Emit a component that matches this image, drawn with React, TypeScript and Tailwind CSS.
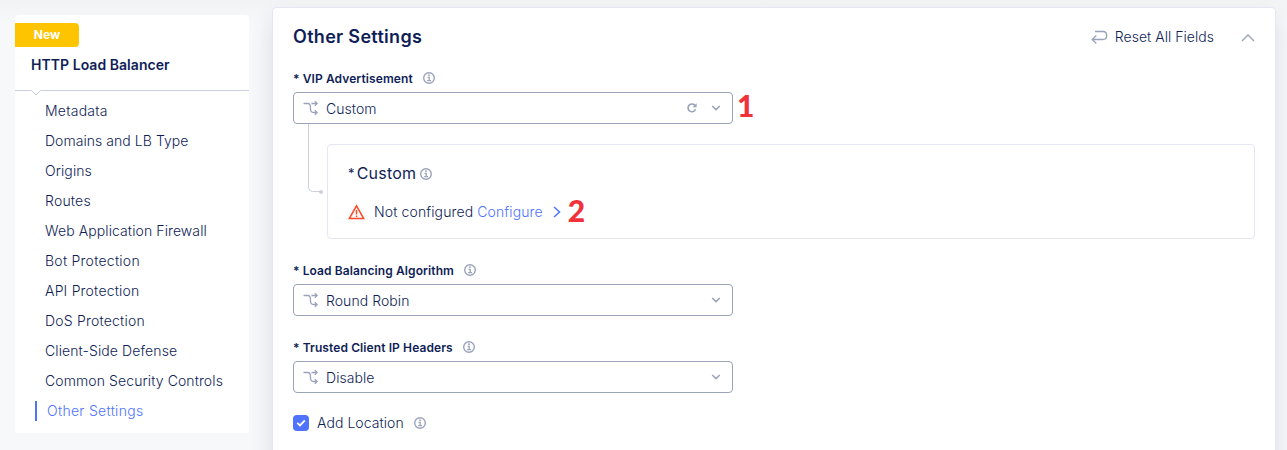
import React from "react";

const sections: { name: string; tracking: string }[] = [
  { name: "Metadata", tracking: "tracking-[0.25px]" },
  { name: "Domains and LB Type", tracking: "tracking-[0.05px]" },
  { name: "Origins", tracking: "tracking-[0.1px]" },
  { name: "Routes", tracking: "tracking-[0.2px]" },
  { name: "Web Application Firewall", tracking: "tracking-[0.1px]" },
  { name: "Bot Protection", tracking: "tracking-[0.25px]" },
  { name: "API Protection", tracking: "tracking-[0.2px]" },
  { name: "DoS Protection", tracking: "tracking-[0.2px]" },
  { name: "Client-Side Defense", tracking: "tracking-[0.1px]" },
  { name: "Common Security Controls", tracking: "tracking-[0.1px]" },
];

function InfoIcon() {
  return (
    <svg width="12" height="12" viewBox="0 0 12 12" fill="none" stroke="#9ba3bb" className="shrink-0">
      <circle cx="6" cy="6" r="5.3" strokeWidth="1.4" />
      <path d="M4.5 5.3H6.2V8.6M4.2 8.6H8" strokeWidth="1.3" />
      <circle cx="6" cy="3.2" r="0.9" fill="#9ba3bb" stroke="none" />
    </svg>
  );
}

function BranchIcon() {
  return (
    <svg width="16" height="16" viewBox="0 0 16 16" fill="none" stroke="#9ba3bb" strokeWidth="1.3" className="shrink-0">
      <path d="M0.5 3.5H5C8 3.5 7.3 6.5 7.5 9C7.6 11.8 8.5 12.5 10.5 12.5H14M8.5 3.5H14" />
      <path d="M11.8 1.2L14.1 3.5L11.8 5.8M11.8 10.2L14.1 12.5L11.8 14.8" />
    </svg>
  );
}

function ChevronDown() {
  return (
    <svg width="10" height="6" viewBox="0 0 10 6" fill="none" stroke="#9ba3bb" strokeWidth="1.5" className="shrink-0">
      <path d="M1.2 1L5 4.6L8.8 1" />
    </svg>
  );
}

function RefreshIcon() {
  return (
    <svg width="10" height="10" viewBox="0 0 10 10" fill="none" stroke="#9ba3bb" strokeWidth="1.6" className="shrink-0">
      <path d="M8.6 6.3A3.9 3.9 0 1 1 8.2 2.7" />
      <path d="M9.6 0.3V4.3H5.6Z" fill="#9ba3bb" stroke="none" />
    </svg>
  );
}

function FieldLabel({ text }: { text: string }) {
  return (
    <div className="flex h-4 items-center text-[12px] font-semibold tracking-[0.1px]">
      <span className="pt-px leading-4">* {text}</span>
      <span className="ml-[10px]">
        <InfoIcon />
      </span>
    </div>
  );
}

function SelectBox({ value, refresh = false }: { value: string; refresh?: boolean }) {
  return (
    <div className="flex h-8 w-[440px] items-center rounded-[4px] border border-[#9aa3b8] pr-[11px] pl-[9px]">
      <BranchIcon />
      <span className="ml-[7px] flex-1 pt-[2px] text-[14px] leading-5 font-[350] tracking-[0.06px]">{value}</span>
      {refresh && <RefreshIcon />}
      <span className="ml-[14px]">
        <ChevronDown />
      </span>
    </div>
  );
}

function Sidebar() {
  return (
    <aside className="mt-[15px] ml-[15px] h-[418px] w-[234px] shrink-0 rounded-[4px] bg-white pt-2">
      <div className="flex h-6 w-16 items-center justify-center rounded-r-[4px] bg-[#ffc400] text-[12px] font-bold text-white">
        New
      </div>
      <h2 className="mt-2 ml-4 text-[14px] leading-5 font-semibold tracking-[0.04px]">HTTP Load Balancer</h2>
      <svg width="234" height="8" viewBox="0 0 234 8" fill="none" stroke="#cad0e0" className="mt-[14px] block">
        <path d="M0 1.5H16.5L21 6L25.5 1.5H234" />
      </svg>
      <nav className="mt-[-1px] flex flex-col pl-[30px] text-[14px] leading-[30px] font-light">
        {sections.map((s) => (
          <a key={s.name} className={`h-[30px] whitespace-nowrap ${s.tracking}`}>
            {s.name}
          </a>
        ))}
        <a className="ml-[-10px] flex h-[30px] items-center tracking-[0.3px] text-[#4f73ff]">
          <span className="mr-[10px] h-5 w-[2px] bg-[#4f73ff]" />
          Other Settings
        </a>
      </nav>
    </aside>
  );
}

function CustomPanel() {
  return (
    <div className="flex">
      <svg width="34" height="115" viewBox="0 0 34 115" fill="none" className="shrink-0">
        <path d="M15.5 0V63.5Q15.5 67.5 19.5 67.5H27" stroke="#cad0e0" />
        <circle cx="28" cy="68" r="2" fill="#cad0e0" />
      </svg>
      <div className="mt-5 h-[95px] w-[928px] rounded-[4px] border border-[#e4e6f1] pl-5">
        <div className="mt-[18px] flex h-5 items-center text-[16px] leading-5 tracking-[0.2px]">
          <span className="mr-[2px] text-[13px]">*</span>
          <span>Custom</span>
          <span className="ml-1 pt-px">
            <InfoIcon />
          </span>
        </div>
        <div className="mt-[19px] flex h-5 items-center text-[14px] leading-5 font-light tracking-[0.12px]">
          <svg width="17" height="16" viewBox="0 0 17 16" fill="none" stroke="#fb4a26" strokeWidth="1.5">
            <path d="M8.5 1.8L15.7 14.6H1.3Z" />
            <path d="M8.5 6V10.4M8.5 11.6V13" />
          </svg>
          <span className="ml-[9px]">Not configured</span>
          <a className="ml-1 text-[#4f73ff]">Configure</a>
          <svg width="8" height="12" viewBox="0 0 8 12" fill="none" stroke="#4f73ff" strokeWidth="1.5" className="ml-[10px]">
            <path d="M1 1L6.5 6L1 11" />
          </svg>
          <span className="mt-[-4px] ml-[7px] font-['Lato'] text-[30px] leading-5 font-black tracking-normal text-[#f1323b]">2</span>
        </div>
      </div>
    </div>
  );
}

export default function App() {
  return (
    <div className="flex h-[450px] w-[1287px] overflow-hidden bg-linear-to-b from-[#f2f3f5] to-[#f7f8fa] to-[24px] font-['Inter','Liberation_Sans',sans-serif] text-[#0f1e57]">
      <Sidebar />
      <main className="mt-[7px] ml-[23px] h-[480px] w-[1004px] shrink-0 rounded-[4px] border border-[#e4e6f1] bg-white pl-5 shadow-[0_12px_22px_rgba(15,30,87,0.13)]">
        <header className="flex h-[58px] items-center pr-[20px]">
          <h1 className="flex-1 text-[18px] leading-6 font-semibold tracking-[0.3px]">Other Settings</h1>
          <svg width="17" height="15" viewBox="0 0 17 15" fill="none" stroke="#9ba3bb" strokeWidth="1.3">
            <path d="M4 1.5H12Q15.7 1.5 15.7 5.5Q15.7 9.5 12 9.5H1.5M5.3 5.5L1.2 9.5L5.3 13.5" />
          </svg>
          <span className="ml-[7px] text-[14px] leading-5 font-[350] tracking-[0.03px]">Reset All Fields</span>
          <svg width="14" height="8" viewBox="0 0 14 8" fill="none" stroke="#9ba3bb" strokeWidth="1.3" className="mt-px ml-[27px]">
            <path d="M1 7L7 1L13 7" />
          </svg>
        </header>
        <div className="mt-1">
          <FieldLabel text="VIP Advertisement" />
          <div className="mt-[6px] flex h-8 items-center">
            <SelectBox value="Custom" refresh />
            <span className="mt-[-6px] ml-1 font-['Lato'] text-[30px] leading-7 font-black text-[#f1323b]">1</span>
          </div>
          <CustomPanel />
        </div>
        <div className="mt-[23px]">
          <FieldLabel text="Load Balancing Algorithm" />
          <div className="mt-[6px]">
            <SelectBox value="Round Robin" />
          </div>
        </div>
        <div className="mt-[23px]">
          <FieldLabel text="Trusted Client IP Headers" />
          <div className="mt-[6px]">
            <SelectBox value="Disable" />
          </div>
        </div>
        <div className="mt-5 flex h-5 items-center text-[14px] leading-5 font-[350] tracking-[0.06px]">
          <span className="mr-2 flex size-4 items-center justify-center rounded-[4px] bg-[#4f73ff]">
            <svg width="10" height="8" viewBox="0 0 10 8" fill="none" stroke="white" strokeWidth="1.8">
              <path d="M1.2 3.8L4 6.4L8.8 1.4" />
            </svg>
          </span>
          <span className="mr-[10px]">Add Location</span>
          <InfoIcon />
        </div>
      </main>
    </div>
  );
}
